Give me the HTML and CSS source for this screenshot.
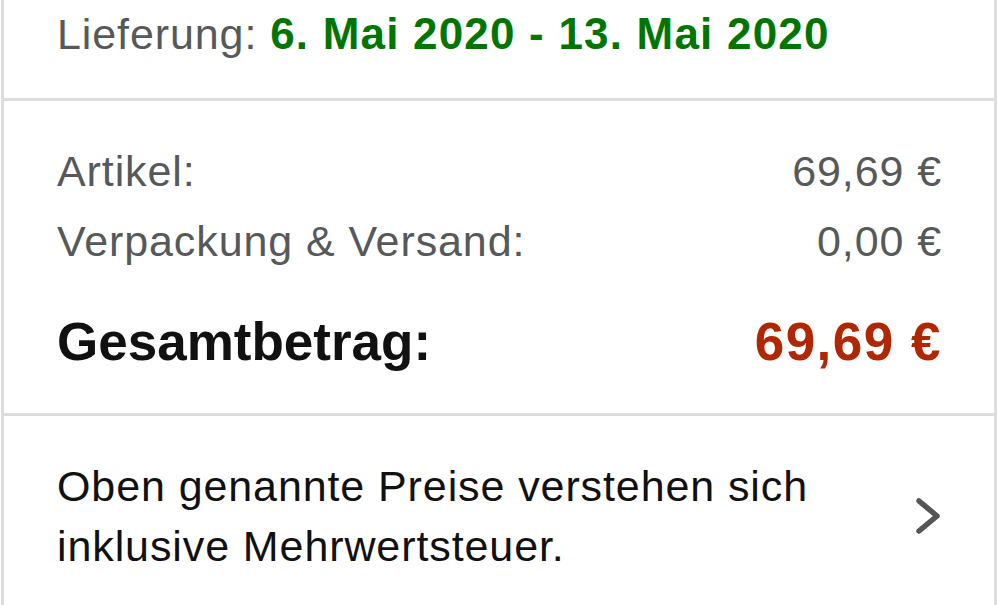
FILE: index.html
```html
<!DOCTYPE html>
<html lang="de">
<head>
<meta charset="utf-8">
<link rel="stylesheet" href="styles.css">
</head>
<body>
<div class="card">
  <section class="delivery">
    <span class="label">Lieferung:</span> <span class="date">6. Mai 2020 - 13. Mai 2020</span>
  </section>
  <section class="summary">
    <div class="row"><span>Artikel:</span><span>69,69 €</span></div>
    <div class="row"><span>Verpackung &amp; Versand:</span><span>0,00 €</span></div>
    <div class="row total"><span>Gesamtbetrag:</span><span class="price">69,69 €</span></div>
  </section>
  <section class="tax">
    <p class="tax-text">Oben genannte Preise verstehen sich inklusive Mehrwertsteuer.</p>
    <svg class="chev" width="30" height="40" viewBox="0 0 30 40"><path d="M6 5 L24 20 L6 35" fill="none" stroke="#555" stroke-width="5.5" stroke-linecap="round" stroke-linejoin="round"/></svg>
  </section>
</div>
</body>
</html>
```
FILE: styles.css
```css
html, body {
  margin: 0;
  padding: 0;
  background: #fff;
}
body {
  font-family: "Liberation Sans", Arial, sans-serif;
  font-size: 43px;
  letter-spacing: 0.9px;
  color: #111;
  overflow: hidden;
  height: 605px;
}
.card {
  margin-left: 1px;
  width: 990px;
  height: 640px;
  border-left: 3px solid #ddd;
  border-right: 3px solid #ddd;
  margin-top: -20px;
}
.delivery {
  height: 118px;
  box-sizing: border-box;
  padding: 26px 52px 0 53px;
  line-height: 56px;
  color: #565959;
  white-space: nowrap;
}
.date {
  color: #007600;
  font-weight: bold;
  font-size: 44px;
  letter-spacing: 1.2px;
}
.summary {
  border-top: 3px solid #ddd;
  padding: 35px 52px 0 53px;
  height: 277px;
  box-sizing: border-box;
  height: 315px;
}
.row {
  display: flex;
  justify-content: space-between;
  line-height: 70px;
  color: #565959;
}
.row.total {
  margin-top: 31px;
  color: #111;
  font-weight: bold;
  font-size: 53px;
  letter-spacing: 0;
}
.price {
  color: #b12704;
  letter-spacing: 1.5px;
}
.tax {
  border-top: 3px solid #ddd;
  display: flex;
  align-items: flex-start;
  justify-content: space-between;
  padding: 40px 51px 0 53px;
}
.tax-text {
  margin: 0;
  width: 800px;
  line-height: 60px;
}
.chev {
  flex: none;
  margin-top: 40px;
}
```
